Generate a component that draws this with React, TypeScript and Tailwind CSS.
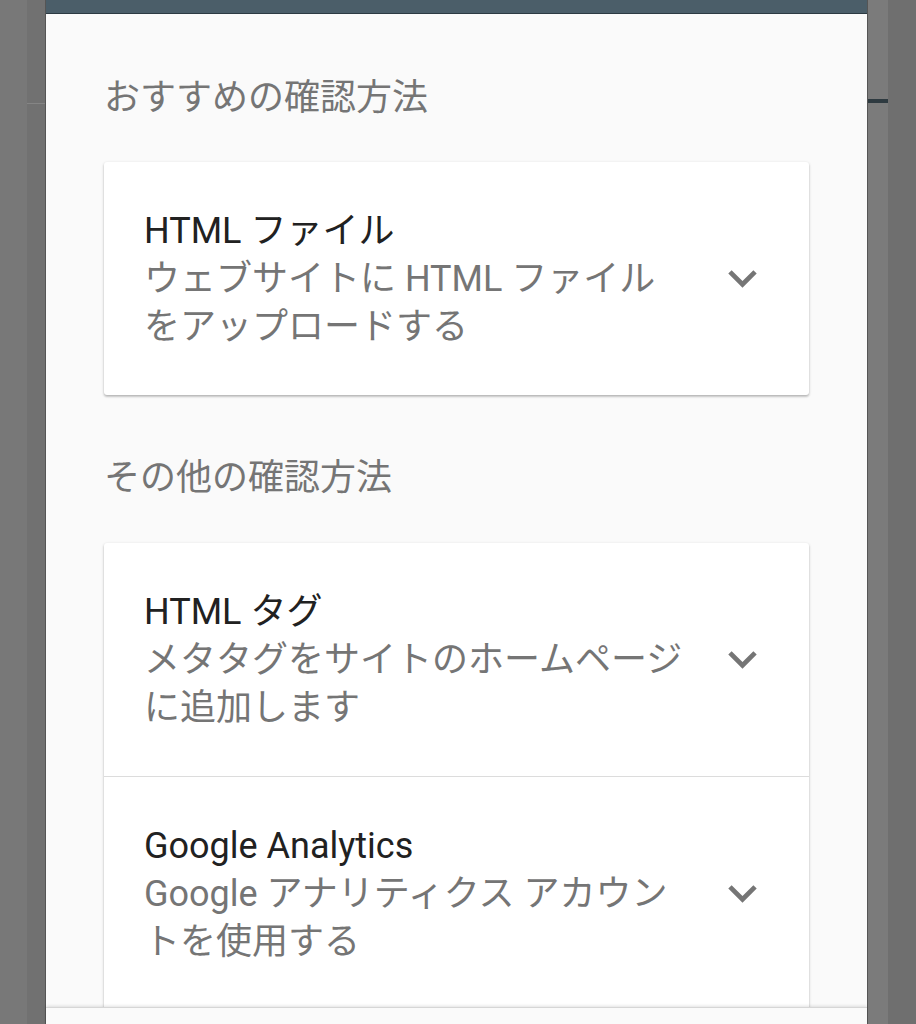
const font = "font-['Roboto','Noto_Sans_CJK_JP',sans-serif]";

function Chevron() {
  return (
    <svg className="w-[29px] h-[18px] shrink-0" viewBox="6 8.5 12 7.6" fill="#757575">
      <path d="M16.59 8.59L12 13.17 7.41 8.59 6 10l6 6 6-6z" />
    </svg>
  );
}

function MethodRow({ title, desc }: { title: string; desc: string }) {
  return (
    <div className="flex items-center pl-[40px] pr-[52px] pt-[45px] pb-[44px]">
      <div className="w-[541px] text-[36px] leading-[48px]">
        <div className="text-[#212121]">{title}</div>
        <div className="text-[#757575]">{desc}</div>
      </div>
      <div className="flex-1 flex justify-end">
        <Chevron />
      </div>
    </div>
  );
}

function Heading({ children }: { children: string }) {
  return <div className="text-[36px] leading-[48px] text-[#757575]">{children}</div>;
}

const card = "bg-white rounded-[3px] shadow-[0_1px_3px_rgba(0,0,0,0.22),0_2px_2px_rgba(0,0,0,0.12)]";

export default function App() {
  return (
    <div className={`flex h-[1024px] w-[916px] overflow-hidden ${font}`}>
      <div className="w-[27px] bg-[#787878]" />
      <div className="w-[18px] bg-[#717171]">
        <div className="h-[103px]" />
        <div className="h-px bg-[#858585]" />
      </div>
      <div className="w-[823px] flex flex-col bg-[#fafafa] border-x border-[#555]">
        <div className="h-[14px] bg-[#4b5e69] border-b border-[#2c3a42]" />
        <div className="flex-1 overflow-hidden px-[58px] pt-[60px]">
          <Heading>おすすめの確認方法</Heading>
          <div className={`${card} mt-[40px]`}>
            <MethodRow title="HTML ファイル" desc="ウェブサイトに HTML ファイルをアップロードする" />
          </div>
          <div className="mt-[59px]">
            <Heading>その他の確認方法</Heading>
          </div>
          <div className={`${card} mt-[41px]`}>
            <MethodRow title="HTML タグ" desc="メタタグをサイトのホームページに追加します" />
            <div className="h-px bg-[#dcdcdc]" />
            <MethodRow title="Google Analytics" desc="Google アナリティクス アカウントを使用する" />
          </div>
        </div>
        <div className="h-[17px] bg-[#fafafa] border-t border-[#d6d6d6] shadow-[0_-1px_3px_rgba(0,0,0,0.12)]" />
      </div>
      <div className="w-[20px] bg-[#7b7b7b]">
        <div className="h-[99px]" />
        <div className="h-[4px] bg-[#2e3a40]" />
      </div>
      <div className="flex-1 bg-[#6f6f6f]" />
    </div>
  );
}
